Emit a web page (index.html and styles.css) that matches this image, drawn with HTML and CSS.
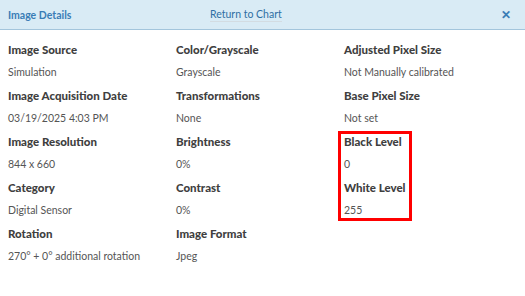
FILE: index.html
```html
<!DOCTYPE html>
<html lang="en">
  <head>
    <meta charset="utf-8">
    <title>Image Details</title>
    <link rel="stylesheet" href="styles.css">
  </head>
  <body>

    <div class="panel">
      <div class="panel__head">
        <span class="panel__title">Image Details</span>
        <a class="panel__link" href="#">Return to Chart</a>
        <span class="panel__close">✕</span>
      </div>

      <div class="details">
        <div class="details__col">
          <div class="item"><div class="item__label">Image Source</div><div class="item__value">Simulation</div></div>
          <div class="item"><div class="item__label">Image Acquisition Date</div><div class="item__value">03/19/2025 4:03 PM</div></div>
          <div class="item"><div class="item__label">Image Resolution</div><div class="item__value">844 x 660</div></div>
          <div class="item"><div class="item__label">Category</div><div class="item__value">Digital Sensor</div></div>
          <div class="item"><div class="item__label">Rotation</div><div class="item__value">270° + 0° additional rotation</div></div>
        </div>

        <div class="details__col">
          <div class="item"><div class="item__label">Color/Grayscale</div><div class="item__value">Grayscale</div></div>
          <div class="item"><div class="item__label">Transformations</div><div class="item__value">None</div></div>
          <div class="item"><div class="item__label">Brightness</div><div class="item__value">0%</div></div>
          <div class="item"><div class="item__label">Contrast</div><div class="item__value">0%</div></div>
          <div class="item"><div class="item__label">Image Format</div><div class="item__value">Jpeg</div></div>
        </div>

        <div class="details__col">
          <div class="item"><div class="item__label">Adjusted Pixel Size</div><div class="item__value">Not Manually calibrated</div></div>
          <div class="item"><div class="item__label">Base Pixel Size</div><div class="item__value">Not set</div></div>
          <!-- highlighted area -->
          <div class="highlight">
            <div class="item"><div class="item__label">Black Level</div><div class="item__value">0</div></div>
            <div class="item"><div class="item__label">White Level</div><div class="item__value">255</div></div>
          </div>
        </div>
      </div>
    </div>

  </body>
</html>
```

FILE: styles.css
```css
body {
  margin: 0;
  background: #fff;
  font-family: Lato, "Noto Sans", sans-serif;
}

.panel__head {
  display: flex;
  align-items: center;
  height: 29px;
  padding: 0 8px;
  background: #d9ebf5;
  border-bottom: 1px solid #a3c5dc;
}

.panel__title {
  width: 202px;
  font-size: 10.5px;
  font-weight: 700;
  color: #3a7db5;
}

.panel__link {
  font-size: 10.5px;
  color: #2f6fa3;
  text-decoration: none;
  border-bottom: 1px solid #d3dce2;
  line-height: 13px;
}

.panel__close {
  margin-left: auto;
  margin-right: 6px;
  font-size: 12px;
  font-weight: 700;
  color: #3a7db5;
}

.details {
  display: grid;
  grid-template-columns: 168px 168px 1fr;
  padding: 8px 8px 0;
}

.item__label {
  line-height: 23px;
  font-size: 11.5px;
  font-weight: 900;
  color: #3f3f3f;
}

.item__value {
  line-height: 23px;
  font-size: 10.5px;
  color: #555;
}

.highlight {
  position: relative;
  width: fit-content;
}

.highlight::before {
  content: "";
  position: absolute;
  inset: 1px -6px 1px -6px;
  border: 3px solid #f00;
}
```
